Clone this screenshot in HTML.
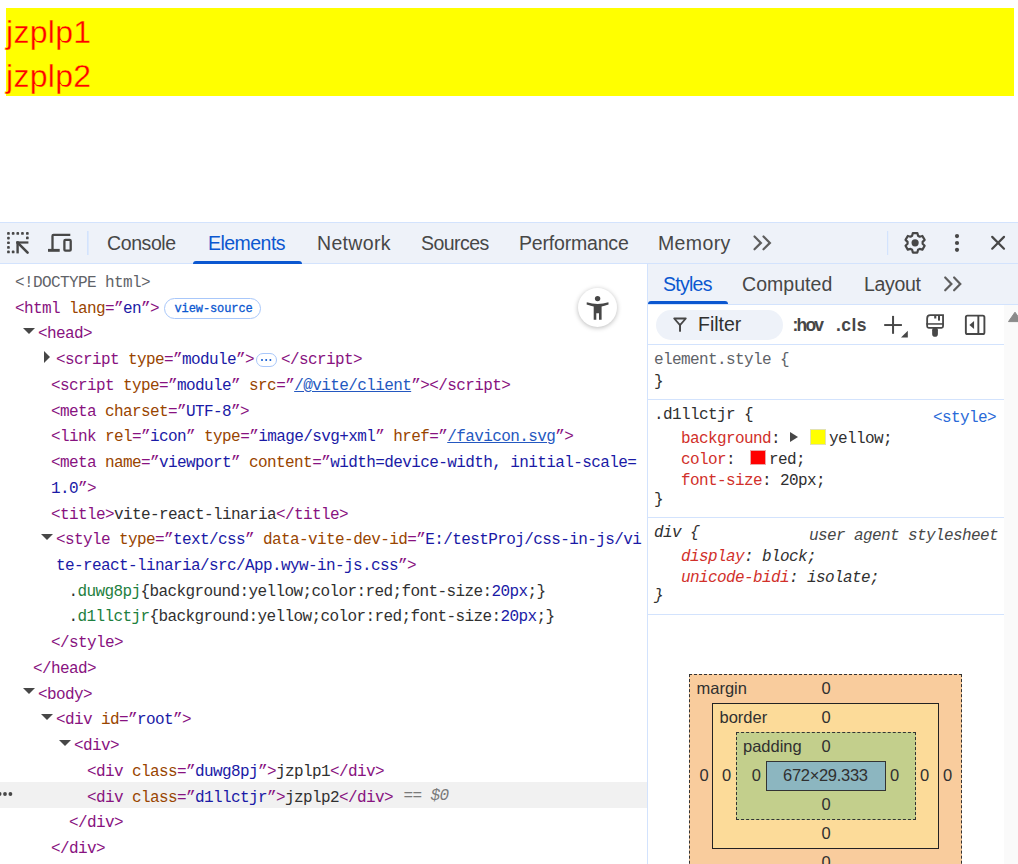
<!DOCTYPE html>
<html><head><meta charset="utf-8"><style>
*{margin:0;padding:0;box-sizing:border-box}
html,body{width:1018px;height:864px;overflow:hidden;background:#fff;position:relative}
body{font-family:"Liberation Sans",sans-serif}
.abs{position:absolute}
.page{position:absolute;left:6px;top:8px;width:1008px;height:88px;background:#ff0;color:#f00;font-size:32px;letter-spacing:0.3px;-webkit-text-stroke:0.35px #ff0}
.page div{position:absolute;left:0;height:44px;line-height:44px;white-space:nowrap}
.tb{position:absolute;left:0;top:222px;width:1018px;height:42px;background:#eef2f9;border-top:1px solid #d3e3fd;border-bottom:1px solid #d3e3fd}
.tab{position:absolute;top:0;font-size:19.5px;color:#474747;line-height:41px;white-space:nowrap}
.row{position:absolute;font-family:"Liberation Mono",monospace;font-size:16px;letter-spacing:-0.6px;line-height:17px;height:17px;white-space:pre}
.tdown{position:absolute;width:0;height:0;border-left:6.2px solid transparent;border-right:6.2px solid transparent;border-top:6.6px solid #474747}
.tright{position:absolute;width:0;height:0;border-top:6.2px solid transparent;border-bottom:6.2px solid transparent;border-left:6.6px solid #474747}
.ell{display:inline-block;width:20.5px;height:14px;border:1px solid #a8c7fa;border-radius:7px;margin:0 4.5px 0 2px;vertical-align:-3px;position:relative}
.ell:after{content:"";position:absolute;left:4px;top:4.5px;width:2.4px;height:2.4px;border-radius:50%;background:#0b57d0;box-shadow:4.2px 0 0 #0b57d0,8.4px 0 0 #0b57d0}
.sty{position:absolute;font-family:"Liberation Mono",monospace;font-size:16px;letter-spacing:-0.6px;line-height:17px;white-space:pre;color:#303030}
.bm{position:absolute;font-size:16.5px;color:#303030;line-height:20px;white-space:nowrap}
</style></head><body>
<div class="page"><div style="top:2px">jzplp1</div><div style="top:46px">jzplp2</div></div>

<div class="tb">
 <svg class="abs" style="left:0;top:-1px" width="1018" height="42" viewBox="0 222 1018 42">
  <g fill="#474747">
   <rect x="7.1" y="232.1" width="2.7" height="2.7" rx="0.9"/><rect x="11.8" y="232.1" width="2.7" height="2.7" rx="0.9"/><rect x="16.4" y="232.1" width="2.7" height="2.7" rx="0.9"/><rect x="21.1" y="232.1" width="2.7" height="2.7" rx="0.9"/><rect x="26" y="232.1" width="2.7" height="2.7" rx="0.9"/>
   <rect x="7.1" y="236.8" width="2.7" height="2.7" rx="0.9"/><rect x="7.1" y="241.4" width="2.7" height="2.7" rx="0.9"/><rect x="7.1" y="246.1" width="2.7" height="2.7" rx="0.9"/><rect x="7.1" y="250.6" width="2.7" height="2.7" rx="0.9"/>
   <rect x="11.8" y="250.6" width="2.7" height="2.7" rx="0.9"/><rect x="26" y="236.6" width="2.7" height="2.7" rx="0.9"/>
   <rect x="16.4" y="241.4" width="2.4" height="12"/><rect x="16.4" y="241.4" width="12" height="2.2"/>
  </g>
  <path d="M17.6 242.6 L27.6 252.6" stroke="#474747" stroke-width="2.6" stroke-linecap="round"/>
  <g fill="none" stroke="#474747" stroke-width="2.3">
   <path d="M70.3 234.9 H53.5 Q52.5 234.9 52.5 235.9 V249.8"/>
   <rect x="64.4" y="239.9" width="6.3" height="10.8" rx="1"/>
  </g>
  <rect x="48" y="248.9" width="11.7" height="2.9" fill="#474747"/>
  <rect x="87" y="231" width="1.6" height="24" fill="#d3e3fd"/>
  <rect x="887" y="231" width="1.2" height="24" fill="#d3e3fd"/>
  <g fill="none" stroke="#5e5e5e" stroke-width="2.2" stroke-linecap="round" stroke-linejoin="miter">
   <path d="M754.5 236.5 L760.9 242.9 L754.5 249.3"/><path d="M763.5 236.5 L769.9 242.9 L763.5 249.3"/>
  </g>
  <polygon points="918.07,235.80 917.35,233.06 912.85,233.06 912.13,235.80 910.53,236.73 907.79,235.98 905.54,239.88 907.56,241.87 907.56,243.73 905.54,245.72 907.79,249.62 910.53,248.87 912.13,249.80 912.85,252.54 917.35,252.54 918.07,249.80 919.67,248.87 922.41,249.62 924.66,245.72 922.64,243.73 922.64,241.87 924.66,239.88 922.41,235.98 919.67,236.73" fill="none" stroke="#474747" stroke-width="2.2" stroke-linejoin="round"/>
  <circle cx="915.1" cy="242.8" r="3.6" fill="#474747"/>
  <g fill="#474747"><circle cx="957" cy="236.1" r="2.1"/><circle cx="957" cy="243" r="2.1"/><circle cx="957" cy="249.8" r="2.1"/></g>
  <path d="M992.2 236.9 L1004 248.7 M1004 236.9 L992.2 248.7" stroke="#474747" stroke-width="2.2" stroke-linecap="round"/>
 </svg>
 <div class="tab" style="left:107px;letter-spacing:-0.4px">Console</div>
 <div class="tab" style="left:208px;color:#0b57d0;letter-spacing:-0.54px">Elements</div>
 <div class="tab" style="left:317px;letter-spacing:0.33px">Network</div>
 <div class="tab" style="left:421px;letter-spacing:-0.53px">Sources</div>
 <div class="tab" style="left:519px;letter-spacing:-0.19px">Performance</div>
 <div class="tab" style="left:658px;letter-spacing:0.38px">Memory</div>
 <div class="abs" style="left:192.5px;top:38px;width:109px;height:3px;background:#0b57d0;border-radius:3px 3px 0 0"></div>
</div>

<!-- elements tree -->
<div class="abs" style="left:0;top:782px;width:647px;height:26px;background:#f1f1f1"></div>
<svg class="abs" style="left:0;top:790px" width="14" height="8"><g fill="#474747"><circle cx="-0.4" cy="4" r="1.9"/><circle cx="5.0" cy="4" r="1.9"/><circle cx="10.4" cy="4" r="1.9"/></g></svg>
<div class="abs" style="left:0;top:264px;width:647px;height:600px;overflow:hidden"><div class="abs" style="left:0;top:-264px;width:647px;height:864px"><div class="row" style="left:15px;top:275.00px"><span style="color:#5f6368">&lt;!DOCTYPE html&gt;</span></div>
<div class="row" style="left:15px;top:300.73px"><span style="color:#881280">&lt;html</span> <span style="color:#994500">lang</span><span style="color:#881280">=”</span><span style="color:#1a1aa6">en</span><span style="color:#881280">”&gt;</span></div>
<div class="row" style="left:38px;top:326.46px"><span style="color:#881280">&lt;head&gt;</span></div>
<div class="tdown" style="left:23px;top:327.96px"></div>
<div class="row" style="left:56px;top:352.19px"><span style="color:#881280">&lt;script</span> <span style="color:#994500">type</span><span style="color:#881280">=”</span><span style="color:#1a1aa6">module</span><span style="color:#881280">”&gt;</span><span class="ell"></span><span style="color:#881280">&lt;/script&gt;</span></div>
<div class="tright" style="left:44px;top:350.99px"></div>
<div class="row" style="left:51px;top:377.92px"><span style="color:#881280">&lt;script</span> <span style="color:#994500">type</span><span style="color:#881280">=”</span><span style="color:#1a1aa6">module</span><span style="color:#881280">”</span> <span style="color:#994500">src</span><span style="color:#881280">=”</span><span style="color:#2458c0;text-decoration:underline">/@vite/client</span><span style="color:#881280">”&gt;</span><span style="color:#881280">&lt;/script&gt;</span></div>
<div class="row" style="left:51px;top:403.65px"><span style="color:#881280">&lt;meta</span> <span style="color:#994500">charset</span><span style="color:#881280">=”</span><span style="color:#1a1aa6">UTF-8</span><span style="color:#881280">”&gt;</span></div>
<div class="row" style="left:51px;top:429.38px"><span style="color:#881280">&lt;link</span> <span style="color:#994500">rel</span><span style="color:#881280">=”</span><span style="color:#1a1aa6">icon</span><span style="color:#881280">”</span> <span style="color:#994500">type</span><span style="color:#881280">=”</span><span style="color:#1a1aa6">image/svg+xml</span><span style="color:#881280">”</span> <span style="color:#994500">href</span><span style="color:#881280">=”</span><span style="color:#2458c0;text-decoration:underline">/favicon.svg</span><span style="color:#881280">”&gt;</span></div>
<div class="row" style="left:51px;top:455.11px"><span style="color:#881280">&lt;meta</span> <span style="color:#994500">name</span><span style="color:#881280">=”</span><span style="color:#1a1aa6">viewport</span><span style="color:#881280">”</span> <span style="color:#994500">content</span><span style="color:#881280">=”</span><span style="color:#1a1aa6">width=device-width, initial-scale=</span></div>
<div class="row" style="left:51px;top:480.84px"><span style="color:#1a1aa6">1.0</span><span style="color:#881280">”&gt;</span></div>
<div class="row" style="left:51px;top:506.57px"><span style="color:#881280">&lt;title&gt;</span><span style="color:#303030">vite-react-linaria</span><span style="color:#881280">&lt;/title&gt;</span></div>
<div class="row" style="left:56px;top:532.30px"><span style="color:#881280">&lt;style</span> <span style="color:#994500">type</span><span style="color:#881280">=”</span><span style="color:#1a1aa6">text/css</span><span style="color:#881280">”</span> <span style="color:#994500">data-vite-dev-id</span><span style="color:#881280">=”</span><span style="color:#1a1aa6">E:/testProj/css-in-js/vi</span></div>
<div class="tdown" style="left:41px;top:533.80px"></div>
<div class="row" style="left:56px;top:558.03px"><span style="color:#1a1aa6">te-react-linaria/src/App.wyw-in-js.css</span><span style="color:#881280">”&gt;</span></div>
<div class="row" style="left:68.5px;top:583.76px"><span style="color:#303030">.</span><span style="color:#1e8040">duwg8pj</span><span style="color:#303030">{background:yellow;color:red;font-size:</span><span style="color:#1a1aa6">20px</span><span style="color:#303030">;}</span></div>
<div class="row" style="left:68.5px;top:609.49px"><span style="color:#303030">.</span><span style="color:#1e8040">d1llctjr</span><span style="color:#303030">{background:yellow;color:red;font-size:</span><span style="color:#1a1aa6">20px</span><span style="color:#303030">;}</span></div>
<div class="row" style="left:51px;top:635.22px"><span style="color:#881280">&lt;/style&gt;</span></div>
<div class="row" style="left:33px;top:660.95px"><span style="color:#881280">&lt;/head&gt;</span></div>
<div class="row" style="left:38px;top:686.68px"><span style="color:#881280">&lt;body&gt;</span></div>
<div class="tdown" style="left:23px;top:688.18px"></div>
<div class="row" style="left:56px;top:712.41px"><span style="color:#881280">&lt;div</span> <span style="color:#994500">id</span><span style="color:#881280">=”</span><span style="color:#1a1aa6">root</span><span style="color:#881280">”&gt;</span></div>
<div class="tdown" style="left:41px;top:713.91px"></div>
<div class="row" style="left:74px;top:738.14px"><span style="color:#881280">&lt;div&gt;</span></div>
<div class="tdown" style="left:59px;top:739.64px"></div>
<div class="row" style="left:87px;top:763.87px"><span style="color:#881280">&lt;div</span> <span style="color:#994500">class</span><span style="color:#881280">=”</span><span style="color:#1a1aa6">duwg8pj</span><span style="color:#881280">”&gt;</span><span style="color:#303030">jzplp1</span><span style="color:#881280">&lt;/div&gt;</span></div>
<div class="row" style="left:87px;top:789.60px"><span style="color:#881280">&lt;div</span> <span style="color:#994500">class</span><span style="color:#881280">=”</span><span style="color:#1a1aa6">d1llctjr</span><span style="color:#881280">”&gt;</span><span style="color:#303030">jzplp2</span><span style="color:#881280">&lt;/div&gt;</span> <span style="color:#7a7a7a;font-style:italic;position:relative;top:-2px;left:1.3px">== $0</span></div>
<div class="row" style="left:69px;top:815.33px"><span style="color:#881280">&lt;/div&gt;</span></div>
<div class="row" style="left:51px;top:841.06px"><span style="color:#881280">&lt;/div&gt;</span></div></div></div>
<div class="abs" style="left:164px;top:298px;width:97px;height:21px;border:1px solid #a8c7fa;border-radius:10.5px;font-family:'Liberation Mono',monospace;font-size:12px;letter-spacing:-0.1px;color:#0b57d0;line-height:21px;padding-left:9.5px;-webkit-text-stroke:0.3px #0b57d0">view-source</div>
<div class="abs" style="left:577.5px;top:287.8px;width:39.5px;height:39.5px;border-radius:50%;background:#fff;box-shadow:0 1px 5px rgba(0,0,0,.28)"></div>
<svg class="abs" style="left:577.5px;top:287.8px" width="40" height="40" viewBox="0 0 40 40"><g fill="#474747"><circle cx="19.6" cy="10.6" r="2.7"/><path d="M8.8 14.3 Q19.6 17.7 30.4 14.3 L30.6 16.5 Q26 18.1 23.6 18.5 V31.8 H21 V25.2 H18.3 V31.8 H15.7 V18.5 Q13.2 18.1 8.6 16.5 Z"/></g></svg>

<!-- sidebar -->
<div class="abs" style="left:647px;top:264px;width:1px;height:600px;background:#d3e3fd"></div>
<div class="abs" style="left:648px;top:264px;width:370px;height:41px;background:#eef2f9;border-bottom:1px solid #d3e3fd"></div>
<div class="tab" style="left:663px;top:264px;color:#0b57d0;letter-spacing:-0.74px">Styles</div>
<div class="tab" style="left:742px;top:264px;letter-spacing:0.05px">Computed</div>
<div class="tab" style="left:864px;top:264px;letter-spacing:-0.32px">Layout</div>
<div class="abs" style="left:648px;top:301px;width:80px;height:3px;background:#0b57d0;border-radius:3px 3px 0 0"></div>
<svg class="abs" style="left:0;top:0" width="1018" height="864">
  <g fill="none" stroke="#5e5e5e" stroke-width="2.2" stroke-linecap="round"><path d="M945.2 277.5 L951.4 283.9 L945.2 290.3"/><path d="M954.1 277.5 L960.3 283.9 L954.1 290.3"/></g>
</svg>
<div class="abs" style="left:1004px;top:305px;width:14px;height:559px;background:#fafafa"></div>
<div class="abs" style="left:648px;top:344px;width:356px;height:1px;background:#d3e3fd"></div>
<div class="abs" style="left:656px;top:310px;width:127px;height:30px;border-radius:15px;background:#eef2f9"></div>
<div class="tab" style="left:698px;top:304px;color:#303030;letter-spacing:0px">Filter</div>
<div class="abs" style="left:792.5px;top:305px;font-size:17.5px;font-weight:bold;color:#474747;line-height:40px;letter-spacing:-1.8px">:hov</div>
<div class="abs" style="left:836px;top:305px;font-size:17.5px;font-weight:bold;color:#474747;line-height:40px;letter-spacing:0.4px">.cls</div>
<svg class="abs" style="left:0;top:0" width="1018" height="864">
  <path d="M674.2 318.5 H685.8 L680 325.2 Z" fill="none" stroke="#474747" stroke-width="1.8" stroke-linejoin="round"/>
  <rect x="679.05" y="324.5" width="1.95" height="7.2" fill="#474747"/>
  <g fill="#474747">
   <rect x="884.2" y="324.06" width="17.7" height="1.95"/><rect x="892.05" y="315.9" width="2" height="17.9"/>
   <path d="M901 337.6 L907.8 330.8 V337.6 Z"/>
  </g>
  <path d="M943.05 315.2 H930.3 Q927.15 315.2 927.15 318.4 V326.3 Q927.15 327.85 928.7 327.85 H941.5 Q943.05 327.85 943.05 326.3 Z" fill="none" stroke="#474747" stroke-width="1.8"/>
  <g fill="#474747">
   <rect x="926.25" y="323.2" width="17.7" height="1.5"/>
   <rect x="934.2" y="315" width="2.1" height="3.5"/><rect x="938" y="315" width="2" height="5.6"/>
   <rect x="932.15" y="327.5" width="5.75" height="9.2" rx="2.8"/>
  </g>
  <rect x="965.85" y="315.65" width="18.55" height="18.4" rx="1.6" fill="none" stroke="#474747" stroke-width="1.9"/>
  <g fill="#474747">
   <rect x="977.4" y="315" width="1.9" height="19.5"/>
   <path d="M969.4 324.9 L974.06 320.9 V328.9 Z"/>
  </g>
  <path d="M1015 312.2 L1008.5 321.6 H1021.5 Z" fill="#8a8a8a" stroke="#8a8a8a" stroke-width="1" stroke-linejoin="round"/>
</svg>

<!-- styles -->
<div class="sty" style="left:654px;top:352px;color:#5f6368">element.style {</div>
<div class="sty" style="left:654px;top:373.5px;color:#303030">}</div>
<div class="abs" style="left:648px;top:399px;width:356px;height:1px;background:#d3e3fd"></div>
<div class="sty" style="left:654px;top:407px">.d1llctjr {</div>
<div class="sty" style="left:933px;top:410px;color:#2a6ad8">&lt;style&gt;</div>
<div class="sty" style="left:681px;top:431px"><span style="color:#d1302a">background</span>: </div>
<div class="abs" style="left:790.1px;top:431.9px;width:0;height:0;border-top:5.9px solid transparent;border-bottom:5.9px solid transparent;border-left:8.8px solid #474747"></div>
<div class="abs" style="left:810.2px;top:429.4px;width:15.8px;height:15.2px;background:#ff0;border:1.5px solid #e2e2b0"></div>
<div class="sty" style="left:829px;top:431px">yellow;</div>
<div class="sty" style="left:681px;top:452px"><span style="color:#d1302a">color</span>: </div>
<div class="abs" style="left:750.3px;top:450.3px;width:15.4px;height:15px;background:#f00;border:1.5px solid #eaa8a8"></div>
<div class="sty" style="left:769px;top:452px">red;</div>
<div class="sty" style="left:681px;top:473px"><span style="color:#d1302a">font-size</span>: 20px;</div>
<div class="sty" style="left:654px;top:492px">}</div>
<div class="abs" style="left:648px;top:517px;width:356px;height:1px;background:#d3e3fd"></div>
<div class="sty" style="left:654px;top:525px;font-style:italic">div {</div>
<div class="sty" style="left:809px;top:528px;font-style:italic;color:#474747">user agent stylesheet</div>
<div class="sty" style="left:681px;top:549px;font-style:italic"><span style="color:#d1302a">display</span>: block;</div>
<div class="sty" style="left:681px;top:570px;font-style:italic"><span style="color:#d1302a">unicode-bidi</span>: isolate;</div>
<div class="sty" style="left:654px;top:588px;font-style:italic">}</div>
<div class="abs" style="left:648px;top:614px;width:356px;height:1px;background:#d3e3fd"></div>

<!-- box model -->
<div class="abs" style="left:689px;top:674px;width:273px;height:220px;background:#f9cc9d;border:1px dashed #333"></div>
<div class="abs" style="left:712px;top:703px;width:227px;height:146px;background:#fcdb99;border:1px solid #222"></div>
<div class="abs" style="left:736px;top:732px;width:180px;height:88px;background:#c3cf8c;border:1px dashed #333"></div>
<div class="abs" style="left:766px;top:761px;width:120px;height:30px;background:#8cb6c0;border:1px solid #333"></div>
<div class="bm" style="left:696.5px;top:678px">margin</div>
<div class="bm" style="left:719.5px;top:707px">border</div>
<div class="bm" style="left:743px;top:736px">padding</div>
<div class="bm" style="left:821.5px;top:678px">0</div>
<div class="bm" style="left:821.5px;top:707px">0</div>
<div class="bm" style="left:821.5px;top:736px">0</div>
<div class="bm" style="left:783px;top:765px;letter-spacing:-0.3px">672×29.333</div>
<div class="bm" style="left:699.5px;top:765px">0</div>
<div class="bm" style="left:722px;top:765px">0</div>
<div class="bm" style="left:751.7px;top:765px">0</div>
<div class="bm" style="left:890px;top:765px">0</div>
<div class="bm" style="left:920px;top:765px">0</div>
<div class="bm" style="left:943px;top:765px">0</div>
<div class="bm" style="left:821.5px;top:794px">0</div>
<div class="bm" style="left:821.5px;top:823px">0</div>
<div class="bm" style="left:821.5px;top:852px">0</div>
</body></html>
